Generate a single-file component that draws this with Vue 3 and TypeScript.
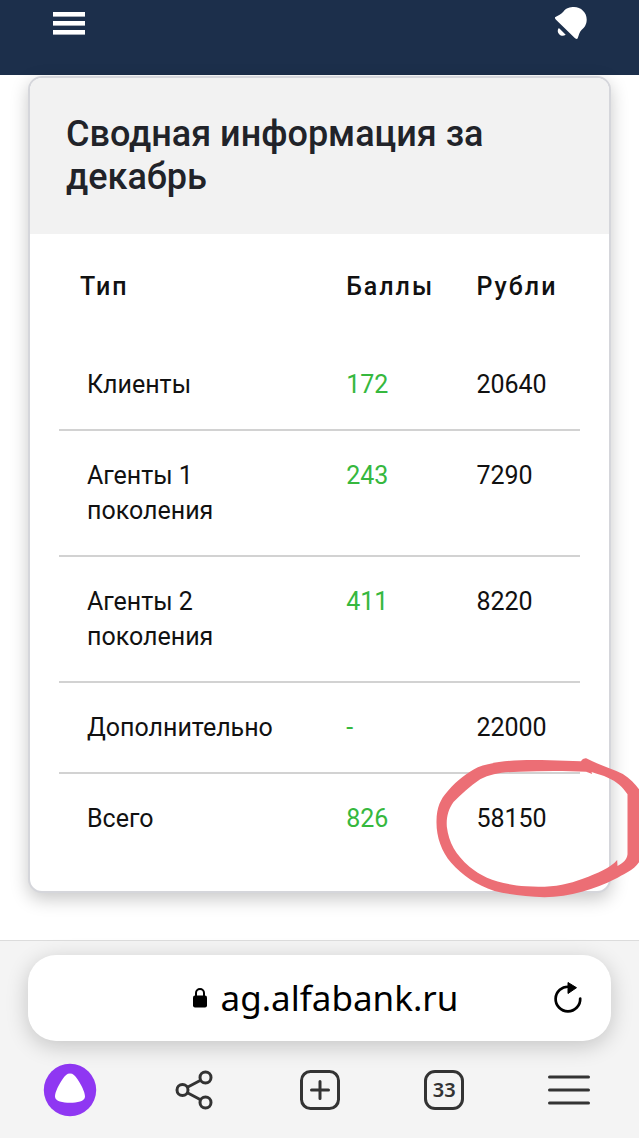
<script setup lang="ts">
interface SummaryRow {
  type: string
  points: string
  rubles: string
  marked?: boolean
}

const rows: SummaryRow[] = [
  { type: 'Клиенты', points: '172', rubles: '20640' },
  { type: 'Агенты 1 поколения', points: '243', rubles: '7290' },
  { type: 'Агенты 2 поколения', points: '411', rubles: '8220' },
  { type: 'Дополнительно', points: '-', rubles: '22000' },
  { type: 'Всего', points: '826', rubles: '58150', marked: true },
]
</script>

<template>
  <div class="screen">
    <header class="topbar">
      <button class="icon-button" type="button" aria-label="Меню">
        <svg width="32" height="32" viewBox="0 0 32 32" fill="#fff">
          <rect y="5" width="32" height="4.6" />
          <rect y="14" width="32" height="4.6" />
          <rect y="23" width="32" height="4.6" />
        </svg>
      </button>
      <button class="icon-button" type="button" aria-label="Уведомления">
        <svg width="32" height="32" viewBox="0 0 32 32" fill="#fff">
          <path d="M0 10.3C3 8.500 6.500 7.500 8.500 4.600C11 1 15 0 19 0C26 0 31.700 5.500 31.700 12.500C31.700 17.500 29.500 20.500 26.500 23C24.300 25 24 28 22.600 31.500C21.500 32.500 20.500 31.800 19.500 30.800L1 12.700C0.200 11.900 -0.300 11.100 0 10.300Z" />
          <path d="M3.900 20.900L10.700 27.700C8.500 29.300 6 29 4.200 27.200C2.400 25.400 2.200 22.900 3.900 20.900Z" />
        </svg>
      </button>
    </header>

    <main class="content">
      <section class="card">
        <div class="card-head">
          <h1>Сводная информация за декабрь</h1>
        </div>
        <div class="card-body">
          <table>
            <colgroup>
              <col class="col-type" />
              <col class="col-points" />
              <col />
            </colgroup>
            <thead>
              <tr>
                <th scope="col">Тип</th>
                <th scope="col">Баллы</th>
                <th scope="col">Рубли</th>
              </tr>
            </thead>
            <tbody>
              <tr v-for="row in rows" :key="row.type">
                <td>{{ row.type }}</td>
                <td class="points">{{ row.points }}</td>
                <td>
                  <span class="amount">
                    {{ row.rubles }}
                    <svg v-if="row.marked" class="mark" viewBox="51 56 606 420" aria-hidden="true">
                      <path
                        fill="#ec6e75"
                        fill-rule="evenodd"
                        d="M484 66Q490 56 500 57C540 78 580 88 610 104C632 118 648 135 660 152V366C645 392 610 405 585 420C530 448 450 474 375 474C320 472 270 466 225 455C170 435 130 410 95 370C65 335 50 290 51 245C52 205 62 180 85 155C115 120 145 100 175 84C230 62 320 60 390 63ZM518 104L500 97C440 94 370 94 300 97C250 98 215 103 182 120C150 142 125 165 102 188C86 210 80 235 82 262C88 310 108 345 150 382C190 415 240 435 320 441C390 446 440 437 490 418C535 402 572 386 593 362L594 380C612 370 622 362 624 345V165C612 145 590 125 565 115C550 108 535 104 516 98Z"
                      />
                    </svg>
                  </span>
                </td>
              </tr>
            </tbody>
          </table>
        </div>
      </section>
    </main>

    <footer class="browser">
      <div class="address">
        <button class="url" type="button">
          <svg width="14" height="20" viewBox="0 0 14 20">
            <rect y="7.500" width="14" height="12" rx="2" />
            <path d="M3 8V5A4 4 0 0 1 11 5V8" fill="none" stroke="#000" stroke-width="2" />
          </svg>
          <span>ag.alfabank.ru</span>
        </button>
        <button class="reload" type="button" aria-label="Обновить">
          <svg width="28" height="32" viewBox="0 0 28 32">
            <path d="M15 4.800A12.300 12.300 0 1 0 26.200 16.500" fill="none" stroke="#000" stroke-width="2.700" stroke-linecap="round" />
            <path d="M14 0.500L22.500 5.700L14 11.500Z" stroke="#000" stroke-linejoin="round" />
          </svg>
        </button>
      </div>
      <nav class="tools">
        <button class="tool" type="button" aria-label="Алиса">
          <svg width="54" height="54" viewBox="0 0 54 54">
            <circle cx="27" cy="27" r="26.200" fill="#8f37f2" />
            <path d="M27 10.500C30 10.500 32 12.500 34.500 16.300C38 21.500 42 29 42 33.500C42 38.500 34 39.700 27 39.700C20 39.700 12 38.500 12 33.500C12 29 16 21.500 19.500 16.300C22 12.500 24 10.500 27 10.500Z" fill="#fff" />
          </svg>
        </button>
        <button class="tool" type="button" aria-label="Поделиться">
          <svg width="54" height="54" viewBox="0 0 54 54" class="line">
            <circle cx="14.500" cy="27" r="5.500" />
            <circle cx="37.500" cy="14.500" r="5.500" />
            <circle cx="37.500" cy="39.500" r="5.500" />
            <path d="M19.400 24.300L32.600 17.200M19.400 29.700L32.600 36.800" />
          </svg>
        </button>
        <button class="tool" type="button" aria-label="Новая вкладка">
          <svg width="54" height="54" viewBox="0 0 54 54" class="line">
            <rect x="8.500" y="8.500" width="37" height="37" rx="9" />
            <path d="M27 18.500V35.500M18.500 27H35.500" stroke-linecap="round" />
          </svg>
        </button>
        <button class="tool" type="button" aria-label="Вкладки">
          <span class="tab-count">33</span>
        </button>
        <button class="tool" type="button" aria-label="Меню браузера">
          <svg width="54" height="54" viewBox="0 0 54 54" class="line">
            <path d="M7.500 14H46.500M7.500 27H46.500M7.500 40H46.500" stroke-linecap="round" />
          </svg>
        </button>
      </nav>
    </footer>
  </div>
</template>

<style>
body {
  margin: 0;
  background: #fff;
}
</style>

<style scoped>
.screen {
  display: flex;
  flex-direction: column;
  min-height: 100vh;
  overflow: hidden;
  box-sizing: border-box;
  font-family: Roboto, "Noto Sans", sans-serif;
  color: #111;
}

button {
  display: flex;
  align-items: center;
  justify-content: center;
  margin: 0;
  padding: 0;
  border: 0;
  background: none;
  font: inherit;
  color: inherit;
}

svg {
  display: block;
}

.topbar {
  display: flex;
  justify-content: space-between;
  padding: 7px 52px 36px 53px;
  background: #1c2f4b;
}

.content {
  flex: 1;
  padding: 1px 28px 40px;
}

.card {
  border: 2px solid #d5d6db;
  border-radius: 14px;
  background: #fff;
  box-shadow: 0 6px 18px rgba(0, 0, 0, 0.22);
}

.card-head {
  padding: 35px 36px;
  border-radius: 12px 12px 0 0;
  background: #f2f2f2;
}

h1 {
  margin: 0;
  font-size: 36px;
  line-height: 43px;
  font-weight: 500;
  color: #212329;
}

.card-body {
  padding: 0 29px 28px;
}

table {
  width: 100%;
  table-layout: fixed;
  border-collapse: separate;
  border-spacing: 0;
  font-size: 25px;
  line-height: 35px;
}

.col-type {
  width: 53%;
}

.col-points {
  width: 25%;
}

th {
  padding: 35px 0 36px 11px;
  text-align: left;
  font-weight: 500;
  letter-spacing: 2px;
}

th:first-child {
  padding-left: 21px;
}

td {
  padding: 27px 0 27px 11px;
  border-bottom: 2px solid #d2d2d2;
  vertical-align: top;
}

td:first-child {
  padding-left: 28px;
  padding-right: 50px;
}

tr:last-child td {
  border-bottom: 0;
}

.points {
  color: #36b83e;
}

.amount {
  position: relative;
  display: block;
}

.mark {
  position: absolute;
  left: -40px;
  top: -43px;
  width: 203px;
  height: 140px;
  pointer-events: none;
}

.browser {
  padding: 14px 28px 21px;
  border-top: 1px solid #dcdcdc;
  background: #f4f4f4;
}

.address {
  position: relative;
  display: flex;
  height: 86px;
  border-radius: 28px;
  background: #fff;
  box-shadow: 0 5px 22px rgba(0, 0, 0, 0.2);
}

.url {
  flex: 1;
  gap: 14px;
  padding-left: 12px;
  font-family: "Noto Sans", sans-serif;
  font-size: 35px;
  line-height: 48px;
  color: #000;
}

.reload {
  position: absolute;
  right: 29px;
  top: 27px;
}

.tools {
  display: flex;
  justify-content: space-between;
  padding: 22px 15px 0;
}

.tool {
  width: 54px;
  height: 54px;
}

.line {
  fill: none;
  stroke: #333;
  stroke-width: 3;
}

.tab-count {
  width: 34px;
  height: 34px;
  border: 3px solid #333;
  border-radius: 11px;
  font-family: "Noto Sans", sans-serif;
  font-size: 20px;
  line-height: 34px;
  font-weight: 600;
  color: #333;
}
</style>
